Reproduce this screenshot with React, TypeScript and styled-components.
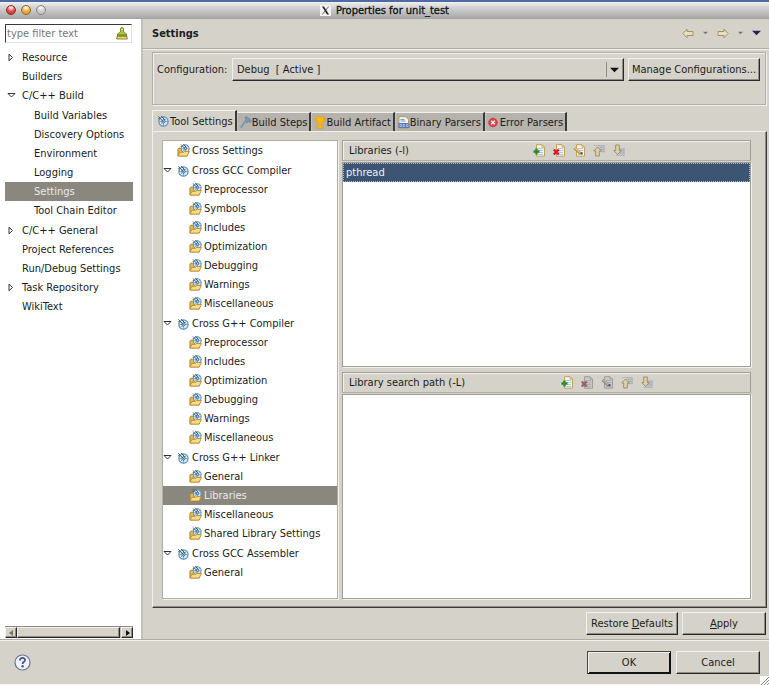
import React from "react";
import styled, { createGlobalStyle, css } from "styled-components";

const face = "#d5d2ca";
const shade = "#b0ada4";
const light = "#f1f0ec";
const dark = "#2a2826";

const Global = createGlobalStyle`
  * { box-sizing: border-box; }
  body { margin: 0; background: ${face}; }
  body, button, input, select {
    font-family: "DejaVu Sans Condensed", "DejaVu Sans", sans-serif;
    font-size: 11px;
    line-height: 13px;
    color: #1c1c1c;
  }
  ul { list-style: none; margin: 0; padding: 0; }
  svg { display: block; flex: none; }
  h1, h2, h3 { margin: 0; font-size: 11px; }
`;

const raised = css`
  border: 1px solid;
  border-color: ${light} ${dark} ${dark} ${light};
  box-shadow: inset -1px -1px 0 #8f8c85;
`;

const Window = styled.div`
  display: flex;
  flex-direction: column;
  min-height: 100vh;
  border-bottom: 1px solid #f4f4f2;
`;

const TitleBar = styled.header`
  position: relative;
  display: flex;
  align-items: center;
  justify-content: center;
  height: 19px;
  border-top: 2px solid #4f6ba3;
  border-bottom: 1px solid #a3a3a1;
  background: linear-gradient(#f0f0f0, #d2d2d2 35%, #a9a9a9);
`;

const Lights = styled.div`
  position: absolute;
  left: 6px;
  top: 3px;
  display: flex;
  gap: 5px;
`;

const Light = styled.button<{ $tone: string; $core: string; $rim: string }>`
  width: 10px;
  height: 10px;
  padding: 0;
  border: 1px solid ${(p) => p.$rim};
  border-radius: 50%;
  background: radial-gradient(circle at 50% 20%, #fff 5%, ${(p) => p.$tone} 45%, ${(p) => p.$core});
`;

const Title = styled.h1`
  display: flex;
  align-items: center;
  gap: 5px;
  font-weight: 400;
  color: #111;
  -webkit-text-stroke: 0.3px #111;
`;

const Body = styled.div`
  display: flex;
  flex: 1;
`;

const Sidebar = styled.nav`
  display: flex;
  flex-direction: column;
  flex: 0 0 142px;
  padding: 5px 8px 1px 5px;
  background: #fff;
  border-right: 2px solid #c2c0b8;
`;

const Filter = styled.label`
  display: flex;
  align-items: center;
  height: 19px;
  width: 127px;
  padding-right: 3px;
  border: 1px solid;
  border-color: #3c3a37 #e2e0da #e2e0da #3c3a37;
`;

const FilterInput = styled.input`
  flex: 1;
  min-width: 0;
  padding: 0 0 0 1px;
  border: 0;
  outline: 0;
  &::placeholder { color: #777; opacity: 1; }
`;

const NavTree = styled.ul`
  flex: 1;
  margin-top: 5px;
  width: 128px;
`;

const NavChildren = styled.ul`
  padding: 1px 0;
`;

const Row = styled.button<{ $indent: number; $selected?: boolean }>`
  display: flex;
  align-items: center;
  width: 100%;
  height: 19px;
  padding: 0 0 0 ${(p) => p.$indent}px;
  border: 0;
  text-align: left;
  white-space: nowrap;
  background: ${(p) => (p.$selected ? "#8a877f" : "transparent")};
  color: ${(p) => (p.$selected ? "#eceae6" : "#1c1c1c")};
`;

const Twist = styled.span<{ $w: number }>`
  width: ${(p) => p.$w}px;
  flex: none;
`;

const IconSlot = styled.span`
  width: 15px;
  flex: none;
`;

const ScrollTrack = styled.div`
  display: flex;
  width: 128px;
  height: 12px;
  background: #bdbab1;
  border-top: 1px solid #8f8c85;
`;

const ScrollButton = styled.button`
  ${raised}
  display: flex;
  align-items: center;
  justify-content: center;
  width: 12px;
  padding: 0;
  background: ${face};
`;

const ScrollThumb = styled.div`
  ${raised}
  flex: 1;
  margin-right: 1px;
  background: ${face};
`;

const Main = styled.main`
  display: flex;
  flex-direction: column;
  flex: 1;
  min-width: 0;
  background: ${face};
`;

const PageHead = styled.div`
  display: flex;
  align-items: center;
  justify-content: space-between;
  height: 30px;
  padding: 0 8px 1px 9px;
  border-bottom: 1px solid ${shade};
  box-shadow: 0 1px 0 ${light};
`;

const HistoryBar = styled.div`
  display: flex;
  align-items: center;
  gap: 9px;
`;

const BareButton = styled.button`
  display: flex;
  padding: 0;
  border: 0;
  background: none;
`;

const Page = styled.div`
  display: flex;
  flex-direction: column;
  flex: 1;
  padding: 3px 2px 4px 9px;
`;

const ConfigBox = styled.section`
  display: flex;
  align-items: flex-start;
  height: 53px;
  margin-right: 1px;
  padding: 5px 5px 0 4px;
  border: 1px solid ${shade};
  box-shadow: 1px 1px 0 ${light}, inset 1px 1px 0 ${light};
`;

const ConfigLabel = styled.label`
  width: 75px;
  padding-top: 5px;
`;

const SelectWrap = styled.div`
  ${raised}
  position: relative;
  display: flex;
  flex: 1;
  height: 23px;
  margin-right: 4px;
`;

const Select = styled.select`
  flex: 1;
  appearance: none;
  padding: 0 4px;
  border: 0;
  background: transparent;
`;

const SelectArrow = styled.span`
  position: absolute;
  right: 4px;
  top: 3px;
  bottom: 3px;
  display: flex;
  align-items: center;
  padding-left: 3px;
  border-left: 1px solid #8f8c85;
  pointer-events: none;
`;

const Button = styled.button<{ $w: number; $primary?: boolean }>`
  ${raised}
  width: ${(p) => p.$w}px;
  height: 23px;
  padding: 0;
  background: ${face};
  white-space: nowrap;
  ${(p) => p.$primary && css`
    border-color: #4a4845 #111 #111 #4a4845;
    box-shadow: inset 1px 1px 0 ${light}, inset -1px -1px 0 #111;
  `}
`;

const Tabs = styled.div`
  display: flex;
  align-items: flex-end;
  margin-top: 5px;
  height: 21px;
`;

const Tab = styled.button<{ $active?: boolean }>`
  display: flex;
  align-items: center;
  gap: ${(p) => (p.$active ? 1 : 0)}px;
  height: ${(p) => (p.$active ? 21 : 19)}px;
  padding: 0 2px 0 ${(p) => (p.$active ? 4 : 2)}px;
  border: 0;
  border-top: 1px solid ${light};
  border-left: 1px solid ${(p) => (p.$active ? light : "#c6c4bc")};
  border-right: 2px solid #3c3a37;
  white-space: nowrap;
  background: ${(p) => (p.$active ? face : "#b5b3ab")};
`;

const TabPage = styled.section`
  display: flex;
  flex: 1;
  gap: 4px;
  padding: 8px 15px 8px 9px;
  border: 1px solid;
  border-color: ${light} #3c3a37 #3c3a37 ${light};
  box-shadow: inset -1px -1px 0 #8f8c85;
`;

const sunken = css`
  background: #fff;
  border: 1px solid ${shade};
  box-shadow: 1px 1px 0 ${light};
`;

const ToolTree = styled.ul`
  ${sunken}
  display: flex;
  flex-direction: column;
  flex: 0 0 176px;
  gap: 1px;
  padding: 0 0 14px;
`;

const Panels = styled.div`
  display: flex;
  flex-direction: column;
  flex: 1;
  gap: 5px;
  min-width: 0;
`;

const Panel = styled.section`
  display: flex;
  flex-direction: column;
  flex: 1;
`;

const PanelHead = styled.div`
  display: flex;
  align-items: center;
  height: 21px;
  padding-left: 6px;
  border: 1px solid #a19e96;
  border-bottom-color: ${shade};
  box-shadow: inset 1px 1px 0 ${light};
`;

const PanelTitle = styled.h3`
  font-weight: 400;
`;

const PanelTools = styled.div`
  display: flex;
  flex: 1;
  justify-content: center;
  gap: 7px;
`;

const ListBox = styled.ul`
  ${sunken}
  flex: 1;
  margin-top: 1px;
  border-color: #a19e96;
`;

const Option = styled.li`
  height: 19px;
  padding: 2px;
  border: 1px dotted #a9b8cb;
  background: #3c5572;
  color: #eef1f5;
`;

const ActionRow = styled.div`
  display: flex;
  justify-content: flex-end;
  gap: 4px;
  padding: 4px 1px 0;
`;

const Footer = styled.footer`
  display: flex;
  align-items: center;
  gap: 5px;
  height: 45px;
  padding: 0 9px 0 14px;
  border-top: 1px solid ${shade};
  box-shadow: inset 0 1px 0 ${light};
  position: relative;
`;

const HelpButton = styled(BareButton)`
  margin-right: auto;
`;

const Grip = styled.span`
  position: absolute;
  right: 0;
  bottom: -1px;
  background: #fff;
`;

const XLogo = () => (
  <svg width="11" height="11" viewBox="0 0 11 11">
    <path d="M0 0h11v11H0z" fill="#f3f3f3" />
    <path d="M2 1.5h2L9 9.5H7z" fill="#222" />
    <path d="M8.7 1.5L2.3 9.5" stroke="#333" strokeWidth=".8" />
  </svg>
);

const Broom = () => (
  <svg width="12" height="13" viewBox="0 0 12 13">
    <path d="M4.500 5V2a1.500 1.500 0 013 0v3l3 2v1.500h-9V7z" fill="#a5cb3a" stroke="#587d16" strokeWidth=".8" />
    <path d="M1.500 8h9l.8 4H.7z" fill="#f0d968" stroke="#6f6b22" strokeWidth=".8" />
    <path d="M1.300 9h9.500" stroke="#46661a" />
    <circle cx="6" cy="2.500" r=".8" fill="#eef6cf" />
  </svg>
);

const Closed = () => (
  <svg width="7" height="9" viewBox="0 0 7 9">
    <path d="M2 1.200v6.600L5.500 4.500z" fill="#fff" stroke="#333" />
  </svg>
);

const Open = () => (
  <svg width="9" height="7" viewBox="0 0 9 7">
    <path d="M1 1.500h7L4.500 5z" fill="#fff" stroke="#333" />
  </svg>
);

const WheelShape = () => (
  <>
    <circle cx="7" cy="7" r="5" fill="#dcebf5" stroke="#5c91bc" strokeWidth="1.300" />
    <path d="M7 2v10M2 7h10M3.500 10.500l7-7" stroke="#6a9cc4" strokeWidth=".9" />
    <circle cx="7" cy="7" r="1.800" fill="#b7d3e8" stroke="#32658f" strokeWidth=".8" />
    <path d="M1.500 1.500l6 6.500M4.500 1l4 4.500" stroke="#3a4c58" strokeWidth="1" />
    <path d="M1 4l2 .2" stroke="#3a4c58" strokeWidth=".8" />
  </>
);

const Wheel = () => (
  <svg width="12" height="12" viewBox="0 0 13 13"><WheelShape /></svg>
);

const Folder = () => (
  <svg width="13" height="13" viewBox="0 0 14 14">
    <path d="M1 12.800V5.500l1-1h3l1 1h5v7.300z" fill="#e9b84a" stroke="#a77524" strokeWidth=".9" />
    <g transform="translate(3 -.8) scale(.84)"><WheelShape /></g>
    <path d="M1 13l2.200-4H7l1-1h5.300L11 13z" fill="#fbdc83" stroke="#b8832a" strokeWidth=".9" />
  </svg>
);

const Steps = () => (
  <svg width="12" height="13" viewBox="0 0 12 13">
    <path d="M5 1.500l2-1 4.500 4.500-1.200 1.500-1.800-1L7 7 4.500 5.500 6 4z" fill="#7897b5" stroke="#5d7f9f" strokeWidth=".7" />
    <path d="M5.500 5.500L1 11.500" stroke="#6d8eac" strokeWidth="2" />
    <path d="M6 6L2 11" stroke="#b2c4d4" strokeWidth=".6" />
  </svg>
);

const Trophy = () => (
  <svg width="12" height="13" viewBox="0 0 12 13">
    <path d="M3 2H.800c0 3 1 4 3 4.500M9 2h2.200c0 3-1 4-3 4.500" fill="none" stroke="#eda81b" strokeWidth="1.300" />
    <path d="M2.500.800h7c0 4-.8 6.200-2.500 7v2h2v2.400H3V9.800h2v-2C3.300 7 2.500 4.800 2.500.800z" fill="#f7b91c" stroke="#e39c12" strokeWidth=".6" />
  </svg>
);

const Sheet = ({ tone, dim }: { tone: string; dim: boolean }) => (
  <>
    <path d="M3.500.700h5.500l2.500 2.500v9h-8z" fill={dim ? "#c9c8c6" : "#eef3fb"} stroke={tone} strokeWidth="1" />
    <path d="M9 .700v2.500h2.500" fill="none" stroke={tone} strokeWidth=".8" />
    <path d="M5 4.500h5M5 6.500h5M5 8.500h5M5 10.500h5" stroke={dim ? "#a7aab3" : "#a9c0e3"} strokeWidth=".9" />
  </>
);

const BinaryDoc = () => (
  <svg width="12" height="13" viewBox="0 0 12 13">
    <path d="M1 .700h6.500l3 3V12H1z" fill="#f3f4f8" stroke="#b5964b" strokeWidth=".9" />
    <path d="M2.500 3.500h4M2.500 5h5" stroke="#7d9bcb" />
    <path d="M.500 7h11v5H.500z" fill="#5d79b4" />
    <path d="M2 8.500h1.500v2H2zM5 8.500h1.500v2H5zM8.500 8.500H10v2H8.500z" fill="none" stroke="#c9d6ee" strokeWidth=".6" />
  </svg>
);

const ErrorMark = () => (
  <svg width="12" height="11" viewBox="0 0 12 11">
    <circle cx="5" cy="5.500" r="4.300" fill="#e2404c" stroke="#c22d3a" strokeWidth=".7" />
    <path d="M3.200 3.700l3.600 3.600M6.800 3.700L3.200 7.300" stroke="#fff" strokeWidth="1.300" />
  </svg>
);

type ToolKind = "add" | "delete" | "edit" | "up" | "down";

const ToolIcon = ({ kind, dim = false }: { kind: ToolKind; dim?: boolean }) => (
  <svg width="13" height="13" viewBox="0 0 13 13">
    {kind === "up" || kind === "down" ? (
      <>
        <path d={kind === "up" ? "M5 1.500h7v7H8" : "M6 4.500h6v7H5"} fill="#bfc0c6" />
        <path d={kind === "up" ? "M1 1.500h11M7 3.500h5M7 5.500h5M8 7.500h4" : "M7 5h5M8 7h4M7 9h5M3 11.500h9"} stroke="#a0a3b0" strokeWidth=".8" strokeDasharray="1.500 .7" />
        <path
          d={kind === "up" ? "M4.500 3L8.200 7H6.300v5H2.700V7H.8z" : "M4.500 10.500L.8 6.500h1.900V1h3.600v5.500h1.900z"}
          fill="#ddd2b0" stroke="#9a875a" strokeWidth=".9"
        />
      </>
    ) : (
      <>
        <Sheet tone={dim ? "#a09d95" : "#c9a147"} dim={dim} />
        {kind === "add" && <path d="M3.500 4.500v6M.5 7.500h6" stroke="#2f8a2c" strokeWidth="2.400" />}
        {kind === "delete" && <path d="M.8 5.500l5 5M5.800 5.500l-5 5" stroke={dim ? "#9b6068" : "#d3202c"} strokeWidth="2.400" />}
        {kind === "edit" && (
          <>
            <path d="M1.500 4l6 5.500" stroke={dim ? "#8e897e" : "#b98f35"} strokeWidth="3" />
            <path d="M2 4l5.500 5" stroke={dim ? "#bbb6a9" : "#f0cc6a"} strokeWidth="1.200" />
            <path d="M7.500 9.300h2" stroke="#3d4146" strokeWidth="1.800" />
          </>
        )}
      </>
    )}
  </svg>
);

const BackArrow = () => (
  <svg width="12" height="11" viewBox="0 0 12 11">
    <path d="M.8 5.500L5 1.200v2.300h6v4H5v2.300z" fill="#e6dfc4" stroke="#a3935f" />
  </svg>
);

const ForwardArrow = () => (
  <svg width="12" height="11" viewBox="0 0 12 11">
    <path d="M11.200 5.500L7 1.200v2.300H1v4h6v2.300z" fill="#e6dfc4" stroke="#a3935f" />
  </svg>
);

const Down = ({ w, color }: { w: number; color: string }) => (
  <svg width={w} height={Math.ceil(w / 2) + 1} viewBox="0 0 8 5">
    <path d="M0 .5h8L4 4.500z" fill={color} />
  </svg>
);

const Side = ({ left = false }: { left?: boolean }) => (
  <svg width="5" height="6" viewBox="0 0 5 6">
    <path d={left ? "M4 0v6L0 3z" : "M1 0v6l4-3z"} fill={left ? "#77746d" : "#111"} />
  </svg>
);

const Help = () => (
  <svg width="17" height="17" viewBox="0 0 17 17">
    <circle cx="8.500" cy="8.500" r="7.500" fill="#f0f1f6" stroke="#6a7694" strokeWidth="1.200" />
    <path d="M5.900 6.500c0-3.400 5.200-3.200 5.200-.4 0 1.700-2.500 1.700-2.500 3.800" fill="none" stroke="#445a8e" strokeWidth="1.800" />
    <circle cx="8.600" cy="12.300" r="1.200" fill="#445a8e" />
  </svg>
);

const GripLines = () => (
  <svg width="9" height="9" viewBox="0 0 9 9">
    <path d="M1 9l8-8M4 9l5-5M7 9l2-2" stroke="#8b8984" />
  </svg>
);

type NavItem = { name: string; state?: "open" | "closed"; children?: string[] };

const navItems: NavItem[] = [
  { name: "Resource", state: "closed" },
  { name: "Builders" },
  {
    name: "C/C++ Build",
    state: "open",
    children: ["Build Variables", "Discovery Options", "Environment", "Logging", "Settings", "Tool Chain Editor"],
  },
  { name: "C/C++ General", state: "closed" },
  { name: "Project References" },
  { name: "Run/Debug Settings" },
  { name: "Task Repository", state: "closed" },
  { name: "WikiText" },
];

const toolGroups = [
  {
    name: "Cross GCC Compiler",
    children: ["Preprocessor", "Symbols", "Includes", "Optimization", "Debugging", "Warnings", "Miscellaneous"],
  },
  {
    name: "Cross G++ Compiler",
    children: ["Preprocessor", "Includes", "Optimization", "Debugging", "Warnings", "Miscellaneous"],
  },
  { name: "Cross G++ Linker", children: ["General", "Libraries", "Miscellaneous", "Shared Library Settings"] },
  { name: "Cross GCC Assembler", children: ["General"] },
];

const tabs = [
  { name: "Tool Settings", icon: <Wheel />, active: true },
  { name: "Build Steps", icon: <Steps /> },
  { name: "Build Artifact", icon: <Trophy /> },
  { name: "Binary Parsers", icon: <BinaryDoc /> },
  { name: "Error Parsers", icon: <ErrorMark /> },
];

const toolKinds: ToolKind[] = ["add", "delete", "edit", "up", "down"];

const LibraryPanel = ({ title, items }: { title: string; items: string[] }) => (
  <Panel>
    <PanelHead>
      <PanelTitle>{title}</PanelTitle>
      <PanelTools>
        {toolKinds.map((kind) => (
          <BareButton key={kind} aria-label={kind}>
            <ToolIcon kind={kind} dim={items.length === 0 && kind !== "add"} />
          </BareButton>
        ))}
      </PanelTools>
    </PanelHead>
    <ListBox role="listbox" aria-label={title}>
      {items.map((item) => (
        <Option key={item} role="option" aria-selected>{item}</Option>
      ))}
    </ListBox>
  </Panel>
);

export default function App() {
  return (
    <>
      <Global />
      <Window>
        <TitleBar>
          <Lights>
            <Light aria-label="Close" $tone="#ee5a55" $core="#b81f22" $rim="#8d2b2b" />
            <Light aria-label="Minimize" $tone="#f5b54a" $core="#d88a1c" $rim="#91642a" />
            <Light aria-label="Zoom" $tone="#cfcfcf" $core="#bdbdbd" $rim="#858585" />
          </Lights>
          <Title><XLogo />Properties for unit_test</Title>
        </TitleBar>
        <Body>
          <Sidebar>
            <Filter>
              <FilterInput placeholder="type filter text" aria-label="type filter text" />
              <BareButton aria-label="Clear"><Broom /></BareButton>
            </Filter>
            <NavTree role="tree">
              {navItems.map((item) => (
                <li key={item.name}>
                  <Row $indent={2}>
                    <Twist $w={15}>
                      {item.state === "open" && <Open />}
                      {item.state === "closed" && <Closed />}
                    </Twist>
                    {item.name}
                  </Row>
                  {item.children && (
                    <NavChildren>
                      {item.children.map((name) => (
                        <li key={name}>
                          <Row $indent={29} $selected={name === "Settings"}>{name}</Row>
                        </li>
                      ))}
                    </NavChildren>
                  )}
                </li>
              ))}
            </NavTree>
            <ScrollTrack>
              <ScrollButton aria-label="Scroll left"><Side left /></ScrollButton>
              <ScrollThumb />
              <ScrollButton aria-label="Scroll right"><Side /></ScrollButton>
            </ScrollTrack>
          </Sidebar>
          <Main>
            <PageHead>
              <h2>Settings</h2>
              <HistoryBar>
                <BareButton aria-label="Back"><BackArrow /></BareButton>
                <BareButton aria-label="Back history"><Down w={5} color="#77746d" /></BareButton>
                <BareButton aria-label="Forward"><ForwardArrow /></BareButton>
                <BareButton aria-label="Forward history"><Down w={5} color="#77746d" /></BareButton>
                <BareButton aria-label="Menu"><Down w={9} color="#2c1f5e" /></BareButton>
              </HistoryBar>
            </PageHead>
            <Page>
              <ConfigBox>
                <ConfigLabel htmlFor="configuration">Configuration:</ConfigLabel>
                <SelectWrap>
                  <Select id="configuration">
                    <option>Debug&nbsp; [ Active ]</option>
                  </Select>
                  <SelectArrow><Down w={9} color="#111" /></SelectArrow>
                </SelectWrap>
                <Button $w={132}>Manage Configurations...</Button>
              </ConfigBox>
              <Tabs role="tablist">
                {tabs.map((tab) => (
                  <Tab key={tab.name} role="tab" aria-selected={!!tab.active} $active={tab.active}>
                    {tab.icon}
                    {tab.name}
                  </Tab>
                ))}
              </Tabs>
              <TabPage role="tabpanel">
                <ToolTree role="tree">
                  <li>
                    <Row $indent={14}><IconSlot><Folder /></IconSlot>Cross Settings</Row>
                  </li>
                  {toolGroups.map((group) => (
                    <li key={group.name}>
                      <Row $indent={0}>
                        <Twist $w={14}><Open /></Twist>
                        <IconSlot><Wheel /></IconSlot>
                        {group.name}
                      </Row>
                      <ul>
                        {group.children.map((name) => (
                          <li key={name}>
                            <Row $indent={26} $selected={name === "Libraries"}>
                              <IconSlot><Folder /></IconSlot>
                              {name}
                            </Row>
                          </li>
                        ))}
                      </ul>
                    </li>
                  ))}
                </ToolTree>
                <Panels>
                  <LibraryPanel title="Libraries (-l)" items={["pthread"]} />
                  <LibraryPanel title="Library search path (-L)" items={[]} />
                </Panels>
              </TabPage>
              <ActionRow>
                <Button $w={92}>Restore <u>D</u>efaults</Button>
                <Button $w={84}><u>A</u>pply</Button>
              </ActionRow>
            </Page>
          </Main>
        </Body>
        <Footer>
          <HelpButton aria-label="Help"><Help /></HelpButton>
          <Button $w={84} $primary>OK</Button>
          <Button $w={84}>Cancel</Button>
          <Grip><GripLines /></Grip>
        </Footer>
      </Window>
    </>
  );
}
